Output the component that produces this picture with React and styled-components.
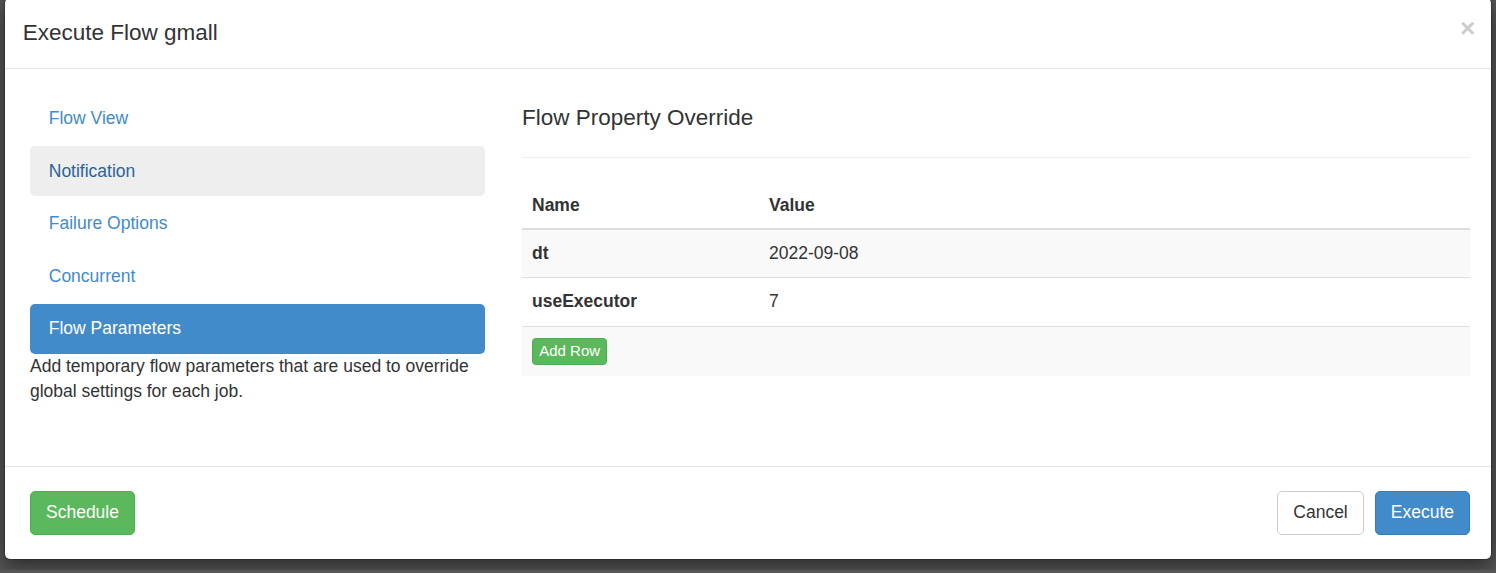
import React from 'react';
import styled, { createGlobalStyle } from 'styled-components';

const GlobalStyle = createGlobalStyle`
  html, body {
    margin: 0;
    padding: 0;
  }
  body {
    background: #565656;
    font-family: "Liberation Sans", Arial, sans-serif;
    font-size: 17.5px;
    line-height: 25px;
    color: #333;
    overflow: hidden;
  }
  * {
    box-sizing: border-box;
  }
`;

const Page = styled.div`
  height: 573px;
`;

const Modal = styled.div`
  margin: -3px 4px 0;
  background: #fff;
  border: 1px solid rgba(0, 0, 0, 0.2);
  border-radius: 6px;
  background-clip: padding-box;
  box-shadow: 0 6px 19px rgba(0, 0, 0, 0.5);
`;

const Header = styled.div`
  display: flex;
  justify-content: space-between;
  padding: 18.75px 18.75px 18.75px 17.75px;
  border-bottom: 1px solid #e5e5e5;
`;

const Title = styled.h4`
  margin: 0;
  font-size: 22.5px;
  font-weight: 500;
  line-height: 32px;
  color: #333;
`;

const Close = styled.button`
  align-self: flex-start;
  margin: -1.5px -3px 0 0;
  padding: 0;
  border: 0;
  background: transparent;
  font-family: "Liberation Sans", Arial, sans-serif;
  font-size: 26.25px;
  font-weight: bold;
  line-height: 1;
  color: #000;
  opacity: 0.2;
  text-shadow: 0 1px 0 #fff;
  cursor: pointer;
`;

const Body = styled.div`
  display: flex;
  gap: 37px;
  height: 397px;
  padding: 25px 21px 0 25px;
`;

const NavColumn = styled.div`
  width: 455px;
  flex: none;
`;

const NavList = styled.ul`
  list-style: none;
  margin: 0;
  padding: 0;
`;

const NavItem = styled.li`
  & + & {
    margin-top: 2.5px;
  }
  a {
    display: block;
    padding: 12.5px 18.75px;
    border-radius: 5px;
    text-decoration: none;
    color: ${(p) => (p.$active ? '#fff' : p.$hover ? '#2a6496' : '#428bca')};
    background: ${(p) => (p.$active ? '#428bca' : p.$hover ? '#eee' : 'transparent')};
  }
`;

const Description = styled.p`
  margin: 0;
  color: #333;
`;

const ContentColumn = styled.div`
  flex: 1;
  min-width: 0;
`;

const SectionTitle = styled.h4`
  margin: 0;
  padding-bottom: 15px;
  border-bottom: 1px solid #eee;
  font-size: 22.5px;
  font-weight: 500;
  line-height: 48px;
  color: #333;
`;

const Table = styled.table`
  width: 100%;
  margin-top: 25px;
  border-collapse: collapse;
  border-spacing: 0;
`;

const Th = styled.th`
  width: ${(p) => p.$width || 'auto'};
  padding: 10px;
  text-align: left;
  font-weight: bold;
  line-height: 25px;
  border-bottom: 2.5px solid #ddd;
`;

const Tr = styled.tr`
  background: ${(p) => (p.$striped ? '#f9f9f9' : '#fff')};
`;

const Td = styled.td`
  padding: 11px 10px 11.5px;
  line-height: 25px;
  font-weight: ${(p) => (p.$bold ? 'bold' : 'normal')};
  vertical-align: top;
  border-top: ${(p) => (p.$first ? '0' : '1px solid #ddd')};
`;

const AddCell = styled.td`
  padding: 11px 10px;
  line-height: 0;
  border-top: 1px solid #ddd;
`;

const variants = {
  success: { bg: '#5cb85c', border: '#4cae4c', color: '#fff' },
  primary: { bg: '#428bca', border: '#357ebd', color: '#fff' },
  default: { bg: '#fff', border: '#ccc', color: '#333' },
};

const Button = styled.button`
  display: inline-block;
  font-family: "Liberation Sans", Arial, sans-serif;
  font-size: ${(p) => (p.$small ? '15px' : '17.5px')};
  line-height: ${(p) => (p.$small ? '22.5px' : '25px')};
  padding: ${(p) => (p.$small ? '1.5px 6.25px' : '8.5px 15px')};
  border-radius: ${(p) => (p.$small ? '3.75px' : '5px')};
  border: 1px solid ${(p) => variants[p.$variant].border};
  background: ${(p) => variants[p.$variant].bg};
  color: ${(p) => variants[p.$variant].color};
  cursor: pointer;
`;

const Footer = styled.div`
  display: flex;
  justify-content: space-between;
  align-items: center;
  padding: 24px 21px 24px 25px;
  border-top: 1px solid #e5e5e5;
`;

const ButtonGroup = styled.div`
  display: flex;
  gap: 11px;
`;

const navItems = ['Flow View', 'Notification', 'Failure Options', 'Concurrent', 'Flow Parameters'];

const properties = [
  { name: 'dt', value: '2022-09-08' },
  { name: 'useExecutor', value: '7' },
];

export default function App() {
  return (
    <>
      <GlobalStyle />
      <Page>
        <Modal>
          <Header>
            <Title>Execute Flow gmall</Title>
            <Close type="button">×</Close>
          </Header>
          <Body>
            <NavColumn>
              <NavList>
                {navItems.map((item) => (
                  <NavItem
                    key={item}
                    $active={item === 'Flow Parameters'}
                    $hover={item === 'Notification'}
                  >
                    <a href="#">{item}</a>
                  </NavItem>
                ))}
              </NavList>
              <Description>
                Add temporary flow parameters that are used to override global settings for each job.
              </Description>
            </NavColumn>
            <ContentColumn>
              <SectionTitle>Flow Property Override</SectionTitle>
              <Table>
                <thead>
                  <tr>
                    <Th $width="25%">Name</Th>
                    <Th>Value</Th>
                  </tr>
                </thead>
                <tbody>
                  {properties.map((p, i) => (
                    <Tr key={p.name} $striped={i % 2 === 0}>
                      <Td $bold $first={i === 0}>{p.name}</Td>
                      <Td $first={i === 0}>{p.value}</Td>
                    </Tr>
                  ))}
                  <Tr $striped>
                    <AddCell colSpan={2}>
                      <Button $small $variant="success" type="button">Add Row</Button>
                    </AddCell>
                  </Tr>
                </tbody>
              </Table>
            </ContentColumn>
          </Body>
          <Footer>
            <Button $variant="success" type="button">Schedule</Button>
            <ButtonGroup>
              <Button $variant="default" type="button">Cancel</Button>
              <Button $variant="primary" type="button">Execute</Button>
            </ButtonGroup>
          </Footer>
        </Modal>
      </Page>
    </>
  );
}
